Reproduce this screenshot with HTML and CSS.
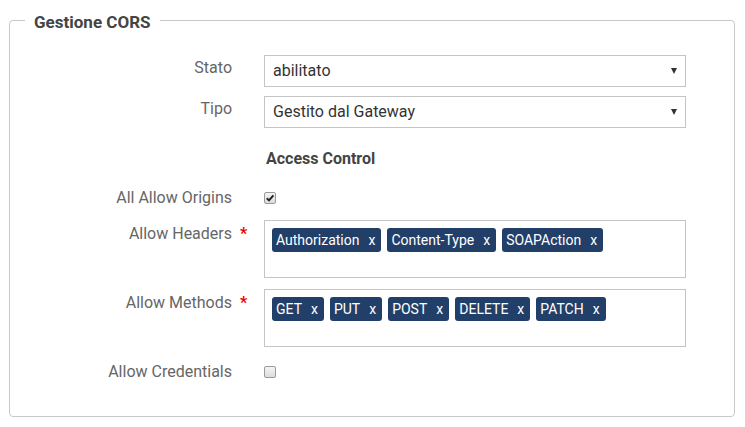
FILE: index.html
```html
<!DOCTYPE html>
<html>
<head>
<meta charset="utf-8">
<link rel="stylesheet" href="styles.css">
</head>
<body>
<fieldset class="panel">
  <legend class="panel-title">Gestione CORS</legend>
  <div class="row row-select">
    <div class="label">Stato</div>
    <div class="select"><span>abilitato</span><span class="arrow"></span></div>
  </div>
  <div class="row row-select2">
    <div class="label">Tipo</div>
    <div class="select"><span>Gestito dal Gateway</span><span class="arrow"></span></div>
  </div>
  <div class="row row-heading">
    <div class="label"></div>
    <div class="heading">Access Control</div>
  </div>
  <div class="row row-check">
    <div class="label">All Allow Origins</div>
    <div class="field-check"><span class="check checked"><svg viewBox="0 0 10 10" width="10" height="10"><path d="M1.8 5.3 L4 7.4 L8.4 2.4" fill="none" stroke="#222" stroke-width="2"/></svg></span></div>
  </div>
  <div class="row row-tags1">
    <div class="label tall">Allow Headers<span class="req">*</span></div>
    <div class="tagbox">
      <span class="tag">Authorization<span class="x">x</span></span>
      <span class="tag">Content-Type<span class="x">x</span></span>
      <span class="tag">SOAPAction<span class="x">x</span></span>
    </div>
  </div>
  <div class="row row-tags2">
    <div class="label tall">Allow Methods<span class="req">*</span></div>
    <div class="tagbox">
      <span class="tag">GET<span class="x">x</span></span>
      <span class="tag">PUT<span class="x">x</span></span>
      <span class="tag">POST<span class="x">x</span></span>
      <span class="tag">DELETE<span class="x">x</span></span>
      <span class="tag">PATCH<span class="x">x</span></span>
    </div>
  </div>
  <div class="row row-check2">
    <div class="label">Allow Credentials</div>
    <div class="field-check"><span class="check"></span></div>
  </div>
</fieldset>
</body>
</html>
```
FILE: styles.css
```css
html, body {
  margin: 0;
  padding: 0;
  background: #fff;
  font-family: Roboto, "Liberation Sans", sans-serif;
}
body {
  padding: 8px 10px 0 9px;
}
.panel {
  margin: 0;
  box-sizing: border-box;
  width: 726px;
  height: 409px;
  border: 1px solid #c8c8c8;
  border-radius: 4px;
  padding: 0;
}
.panel-title {
  margin-left: 15px;
  padding: 4px 9px 0 9px;
  font-size: 17px;
  line-height: 20px;
  font-weight: bold;
  color: #444;
}
.row {
  display: flex;
  align-items: flex-start;
}
.label {
  width: 222px;
  flex: none;
  text-align: right;
  font-size: 16px;
  line-height: 20px;
  color: #666;
}
.row > :nth-child(2) {
  margin-left: 32px;
}
.row-select { margin-top: 23px; }
.row-select .label, .row-select2 .label { padding-top: 3px; }
.label.tall { padding-top: 4px; }
.row-select2 { margin-top: 9px; }
.row-heading { margin-top: 21px; }
.row-check { margin-top: 19px; }
.row-tags1 { margin-top: 12px; }
.row-tags2 { margin-top: 11px; }
.row-check2 { margin-top: 15px; }
.select {
  width: 422px;
  height: 32px;
  box-sizing: border-box;
  border: 1px solid #c4c4c4;
  display: flex;
  align-items: center;
  justify-content: space-between;
  padding: 0 8px 1px 8px;
  font-size: 16px;
  color: #333;
}
.arrow {
  width: 0;
  height: 0;
  border-left: 3.5px solid transparent;
  border-right: 3.5px solid transparent;
  border-top: 6px solid #333;
  margin-top: 1px;
}
.heading {
  font-size: 16px;
  line-height: 20px;
  font-weight: bold;
  color: #444;
  padding-left: 2px;
}
.field-check {
  height: 20px;
  display: flex;
  align-items: center;
}
.check {
  width: 12px;
  height: 12px;
  box-sizing: border-box;
  border: 1px solid #9a9a9a;
  border-radius: 2px;
  background: linear-gradient(#f4f4f4, #dcdcdc);
  display: flex;
  align-items: center;
  justify-content: center;
}
.req {
  display: inline-block;
  width: 16px;
  margin-right: -16px;
  padding-left: 8px;
  box-sizing: border-box;
  text-align: left;
  color: #e00;
  font-weight: bold;
}
.tagbox {
  width: 422px;
  height: 58px;
  box-sizing: border-box;
  border: 1px solid #c4c4c4;
  padding: 7px 0 0 7px;
  display: flex;
  flex-wrap: wrap;
  align-content: flex-start;
  gap: 6px;
}
.tag {
  height: 24px;
  display: inline-flex;
  align-items: center;
  background: #223f6a;
  color: #fff;
  border-radius: 3px;
  padding: 0 6px 0 4px;
  font-size: 14px;
}
.x {
  margin-left: 9px;
}
```
